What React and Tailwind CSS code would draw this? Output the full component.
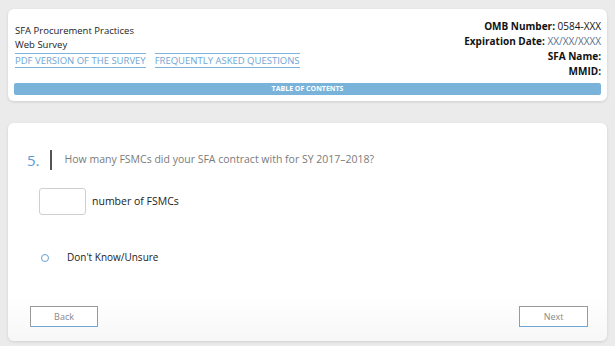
import React from 'react'

const font = { fontFamily: '"Open Sans", "Noto Sans", sans-serif' }

function Header() {
  return (
    <div className="mx-2 mt-[9px] h-[92px] rounded-md bg-white px-[6px] shadow-[0_1px_3px_rgba(0,0,0,0.12)]">
      <div className="flex justify-between">
        <div className="pl-[1px] pt-[15px]">
          <div className="text-[9.5px] leading-[14px] text-[#222]">SFA Procurement Practices</div>
          <div className="text-[9.5px] leading-[14px] text-[#222]">Web Survey</div>
          <div className="mt-[1px] flex gap-[9px]">
            <a className="border-y border-[#7fb2dc] text-[9.5px] leading-[13px] text-[#6fa6d6]">PDF VERSION OF THE SURVEY</a>
            <a className="border-y border-[#7fb2dc] text-[9.5px] leading-[13px] text-[#6fa6d6]">FREQUENTLY ASKED QUESTIONS</a>
          </div>
        </div>
        <div className="pt-[10px] text-right text-[10px] leading-[15px] text-[#111]">
          <div>
            <span className="font-bold">OMB Number: </span>
            <span className="bg-white">0584-XXX</span>
          </div>
          <div>
            <span className="font-bold">Expiration Date: </span>
            <span className="text-[#5a6f8a]">XX/XX/XXXX</span>
          </div>
          <div className="font-bold">SFA Name:</div>
          <div className="font-bold">MMID:</div>
        </div>
      </div>
      <div className="mt-[4px] flex h-[12px] items-center justify-center rounded-[2px] bg-[#7ab3d9] text-[7px] font-bold text-white">
        TABLE OF CONTENTS
      </div>
    </div>
  )
}

function Question() {
  return (
    <div className="mx-2 mt-[22px] flex h-[218px] flex-col rounded-md bg-gradient-to-b from-white from-80% to-[#f7f7f7] shadow-[0_1px_3px_rgba(0,0,0,0.12)]">
      <div className="flex items-center pl-[19px] pt-[27px]">
        <span className="text-[15px] leading-[20px] text-[#5b9bd5]">5.</span>
        <span className="ml-[10px] h-[20px] w-[2px] bg-[#555]" />
        <span className="ml-[13px] text-[10.5px] text-[#7a7a7a]">
          How many FSMCs did your SFA contract with for SY 2017–2018?
        </span>
      </div>
      <div className="mt-[18px] flex items-center pl-[31px]">
        <div className="h-[27px] w-[47px] rounded-[3px] border border-[#cfcfcf] bg-white" />
        <span className="ml-[6px] text-[10.5px] text-[#222]">number of FSMCs</span>
      </div>
      <div className="mt-[35px] flex items-center pl-[33px]">
        <span className="h-[8px] w-[8px] rounded-full border-[1.5px] border-[#6a9fd0]" />
        <span className="ml-[18px] text-[10px] text-[#222]">Don't Know/Unsure</span>
      </div>
      <div className="mt-auto mb-[14px] flex justify-between pl-[22px] pr-[19px]">
        <button className="h-[21px] w-[68px] border border-[#9a9a9a] border-b-[#6fa6d6] bg-white text-[9px] text-[#888]">Back</button>
        <button className="h-[21px] w-[69px] border border-[#9a9a9a] border-b-[#6fa6d6] bg-white text-[9px] text-[#888]">Next</button>
      </div>
    </div>
  )
}

export default function App() {
  return (
    <div className="h-[346px] w-[615px] overflow-hidden bg-[#ebebeb]" style={font}>
      <Header />
      <Question />
    </div>
  )
}
